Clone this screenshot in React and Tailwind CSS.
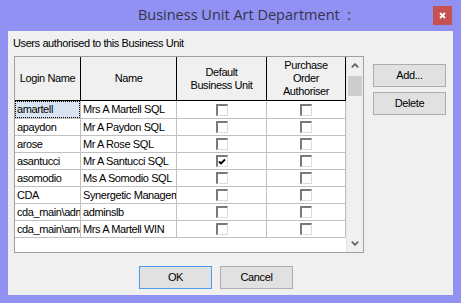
import React from "react";

const rows = [
  { login: "amartell", name: "Mrs A Martell SQL", def: false, po: false, selected: true },
  { login: "apaydon", name: "Mr A Paydon SQL", def: false, po: false },
  { login: "arose", name: "Mr A Rose SQL", def: false, po: false },
  { login: "asantucci", name: "Mr A Santucci SQL", def: true, po: false },
  { login: "asomodio", name: "Ms A Somodio SQL", def: false, po: false },
  { login: "CDA", name: "Synergetic Management", def: false, po: false },
  { login: "cda_main\\adminslb", name: "adminslb", def: false, po: false },
  { login: "cda_main\\amartell", name: "Mrs A Martell WIN", def: false, po: false },
];

function Check({ checked }) {
  return (
    <div className="w-[12px] h-[12px] bg-white border-t-2 border-l-2 border-t-[#7a7a7a] border-l-[#7a7a7a] border-b border-r border-b-[#dcdcdc] border-r-[#dcdcdc] flex items-center justify-center">
      {checked && (
        <svg width="8" height="7" viewBox="0 0 8 7">
          <polyline points="1,3.5 3,5.5 7,1.5" fill="none" stroke="#000" strokeWidth="1.8" />
        </svg>
      )}
    </div>
  );
}

function Chevron({ up }) {
  return (
    <svg width="8" height="5" viewBox="0 0 8 5">
      <polyline
        points={up ? "0.8,4.3 4,1.1 7.2,4.3" : "0.8,0.7 4,3.9 7.2,0.7"}
        fill="none"
        stroke="#606060"
        strokeWidth="1.7"
      />
    </svg>
  );
}

function Button({ children, primary }) {
  return (
    <div
      className={
        "w-[73px] h-[23px] flex items-center justify-center bg-[#e1e1e1] border " +
        (primary ? "border-[#4c9ee8]" : "border-[#adadad]")
      }
    >
      {children}
    </div>
  );
}

function HeaderCell({ className, children }) {
  return (
    <div className={"h-full flex items-center justify-center text-center leading-[13px] border-r border-black " + className}>
      {children}
    </div>
  );
}

function Grid() {
  return (
    <div className="w-[350px] h-[197px] border border-[#a0a0a0] bg-white flex shrink-0">
      <div className="w-[331px] flex flex-col">
        {/* header */}
        <div className="h-[44px] flex bg-[#f0f0f0] border-b border-black shrink-0">
          <HeaderCell className="w-[66px]">Login Name</HeaderCell>
          <HeaderCell className="w-[96px]">Name</HeaderCell>
          <HeaderCell className="w-[90px]">
            Default
            <br />
            Business Unit
          </HeaderCell>
          <HeaderCell className="w-[79px]">
            Purchase
            <br />
            Order
            <br />
            Authoriser
          </HeaderCell>
        </div>
        {/* rows */}
        {rows.map((r, i) => (
          <div
            key={r.login}
            className={"flex border-b border-[#c0c0c0] shrink-0 " + (i === 0 ? "h-[18px]" : "h-[17px]")}
          >
            <div className="w-[66px] h-full border-r border-[#c0c0c0] flex overflow-hidden whitespace-nowrap">
              {r.selected ? (
                <div className="flex-1 h-full flex items-center pl-[1px] bg-[#d9e4f3] border border-dotted border-black">
                  {r.login}
                </div>
              ) : (
                <div className="flex-1 h-full flex items-center pl-[2px]">{r.login}</div>
              )}
            </div>
            <div className="w-[96px] h-full border-r border-[#c0c0c0] flex items-center pl-[2px] overflow-hidden whitespace-nowrap">
              {r.name}
            </div>
            <div className="w-[90px] h-full border-r border-[#c0c0c0] flex items-center justify-center">
              <Check checked={r.def} />
            </div>
            <div className="w-[79px] h-full border-r border-[#c0c0c0] flex items-center justify-center">
              <Check checked={r.po} />
            </div>
          </div>
        ))}
        <div className="flex-1 bg-white" />
      </div>
      {/* scrollbar */}
      <div className="w-[17px] h-full bg-[#f0f0f0] border-l border-dotted border-[#e0e0e0] flex flex-col">
        <div className="h-[17px] flex items-center justify-center shrink-0">
          <Chevron up />
        </div>
        <div className="mt-[2px] mx-[1px] h-[20px] bg-[#cdcdcd] shrink-0" />
        <div className="flex-1" />
        <div className="h-[17px] flex items-center justify-center shrink-0">
          <Chevron />
        </div>
      </div>
    </div>
  );
}

export default function App() {
  return (
    <div className="w-[461px] h-[303px] bg-[#9191f3] flex flex-col overflow-hidden font-['Liberation_Sans',Arial,sans-serif] text-[11px] tracking-[-0.4px] text-black">
      {/* title bar */}
      <div className="h-[31px] flex items-start shrink-0">
        <div className="flex-1 h-full flex items-center justify-center pl-[56px] pb-[1px] font-['Open_Sans',sans-serif] text-[14.5px] tracking-normal text-[#34344a]">
          Business Unit Art Department&nbsp;&nbsp;:
        </div>
        <div className="mt-[6px] mr-[9px] w-[19px] h-[19px] bg-[#c75050] flex items-center justify-center">
          <svg width="7" height="7" viewBox="0 0 7 7">
            <path d="M1 1 L6 6 M6 1 L1 6" stroke="#fff" strokeWidth="1.8" />
          </svg>
        </div>
      </div>
      {/* client area */}
      <div className="mx-[8px] mb-[8px] flex-1 bg-[#f0f0f0] flex flex-col pt-[6px] pl-[6px]">
        <div className="h-[13px] leading-[13px] -ml-px">Users authorised to this Business Unit</div>
        <div className="mt-[6px] flex items-start">
          <Grid />
          <div className="ml-[9px] mt-[8px] flex flex-col gap-[5px]">
            <Button>Add...</Button>
            <Button>Delete</Button>
          </div>
        </div>
        <div className="mt-[13px] pl-[125px] flex gap-[8px]">
          <Button primary>OK</Button>
          <Button>Cancel</Button>
        </div>
      </div>
    </div>
  );
}
